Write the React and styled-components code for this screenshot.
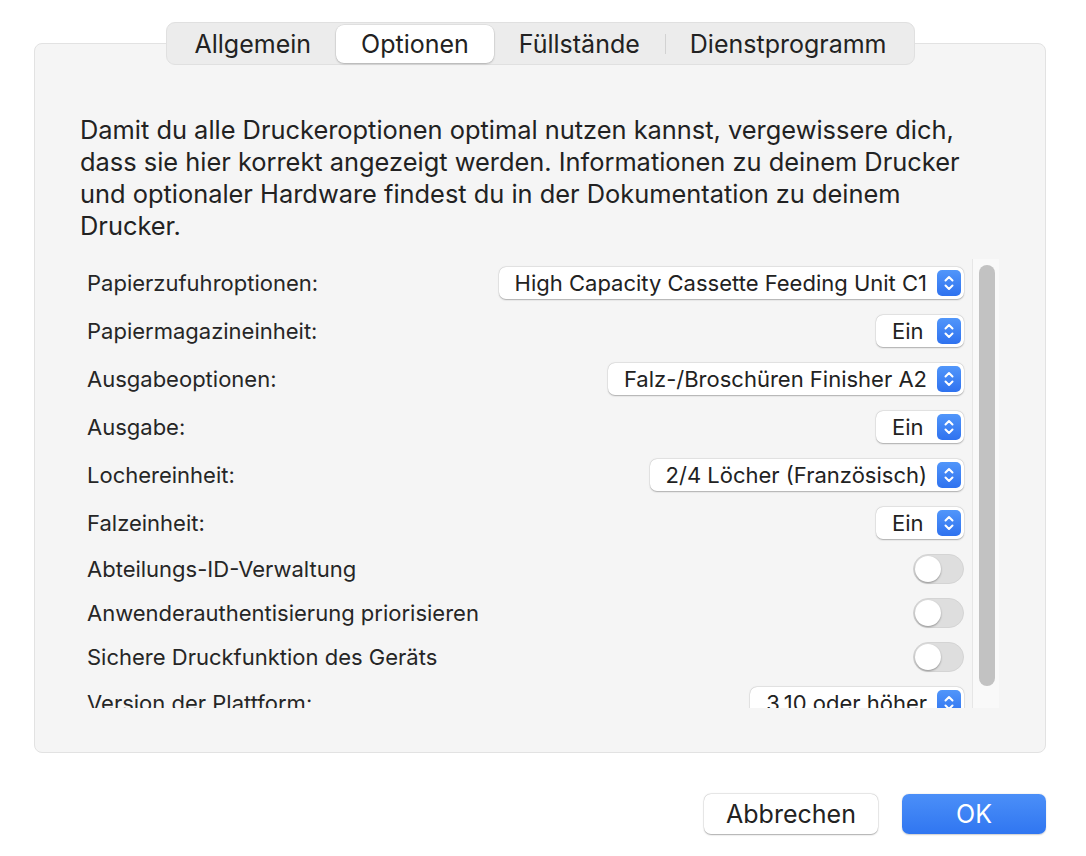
import React, { useState } from 'react'
import styled, { createGlobalStyle } from 'styled-components'

const tabs = ['Allgemein', 'Optionen', 'Füllstände', 'Dienstprogramm']

const options = [
  { label: 'Papierzufuhroptionen:', kind: 'popup', value: 'High Capacity Cassette Feeding Unit C1' },
  { label: 'Papiermagazineinheit:', kind: 'popup', value: 'Ein' },
  { label: 'Ausgabeoptionen:', kind: 'popup', value: 'Falz-/Broschüren Finisher A2' },
  { label: 'Ausgabe:', kind: 'popup', value: 'Ein' },
  { label: 'Lochereinheit:', kind: 'popup', value: '2/4 Löcher (Französisch)' },
  { label: 'Falzeinheit:', kind: 'popup', value: 'Ein' },
  { label: 'Abteilungs-ID-Verwaltung', kind: 'toggle' },
  { label: 'Anwenderauthentisierung priorisieren', kind: 'toggle' },
  { label: 'Sichere Druckfunktion des Geräts', kind: 'toggle' },
  { label: 'Version der Plattform:', kind: 'popup', value: '3.10 oder höher' },
]

const App = () => {
  const [active, setActive] = useState('Optionen')

  return (
    <>
      <GlobalStyle />
      <Sheet>
        <TabBar>
          {tabs.map((tab, i) => {
            // separator only between two unselected tabs
            const prev = tabs[i - 1]
            const showSep = i > 0 && tab !== active && prev !== active
            return (
              <Tab key={tab} selected={tab === active} onClick={() => setActive(tab)}>
                {showSep && <Separator />}
                {tab}
              </Tab>
            )
          })}
        </TabBar>
        <Panel>
          <Intro>
            Damit du alle Druckeroptionen optimal nutzen kannst, vergewissere dich,
            dass sie hier korrekt angezeigt werden. Informationen zu deinem Drucker
            und optionaler Hardware findest du in der Dokumentation zu deinem
            Drucker.
          </Intro>
          <ScrollArea>
            <List>
              {options.map(opt => (
                <Row key={opt.label} toggle={opt.kind === 'toggle'}>
                  <Label>{opt.label}</Label>
                  {opt.kind === 'popup' ? (
                    <Popup>
                      <span>{opt.value}</span>
                      <Stepper />
                    </Popup>
                  ) : (
                    <Toggle>
                      <Knob />
                    </Toggle>
                  )}
                </Row>
              ))}
            </List>
            <Track>
              <Thumb />
            </Track>
          </ScrollArea>
        </Panel>
        <Footer>
          <Button>Abbrechen</Button>
          <Button primary>OK</Button>
        </Footer>
      </Sheet>
    </>
  )
}

const Stepper = () => (
  <StepperBox>
    <svg width="12" height="18" viewBox="0 0 12 18" fill="none">
      <path d="M2.5 6.5 L6 3 L9.5 6.5" stroke="white" strokeWidth="2" strokeLinecap="round" strokeLinejoin="round" />
      <path d="M2.5 11.5 L6 15 L9.5 11.5" stroke="white" strokeWidth="2" strokeLinecap="round" strokeLinejoin="round" />
    </svg>
  </StepperBox>
)

const GlobalStyle = createGlobalStyle`
  body {
    margin: 0;
    background: #ffffff;
    font-family: Inter, "Liberation Sans", Arial, sans-serif;
    color: #262626;
  }
`

const Sheet = styled.div`
  width: 1086px;
  height: 856px;
  box-sizing: border-box;
  padding: 22px 40px 0 34px;
  display: flex;
  flex-direction: column;
`

const TabBar = styled.div`
  align-self: center;
  display: flex;
  align-items: center;
  height: 43px;
  box-sizing: border-box;
  padding: 0 2px;
  background: #ececec;
  border: 1px solid #e0e0e0;
  border-radius: 9px;
  position: relative;
  z-index: 1;
  margin-left: 1px;
`

const Tab = styled.div`
  position: relative;
  height: 38px;
  display: flex;
  align-items: center;
  padding: 0 25px;
  font-size: 25px;
  color: #222;
  border-radius: 8px;
  cursor: default;
  background: ${({ selected }) => (selected ? '#ffffff' : 'transparent')};
  box-shadow: ${({ selected }) => (selected ? '0 1px 2px rgba(0,0,0,0.22), 0 0 0 0.5px rgba(0,0,0,0.08)' : 'none')};
`

const Separator = styled.span`
  position: absolute;
  left: 0;
  top: 9px;
  width: 1px;
  height: 20px;
  background: #d2d2d2;
`

const Panel = styled.div`
  margin-top: -22px;
  background: #f5f5f5;
  border: 1px solid #e2e2e2;
  border-radius: 8px;
  padding: 70px 46px 44px 45px;
  display: flex;
  flex-direction: column;
`

const Intro = styled.p`
  margin: 0 0 17px;
  max-width: 905px;
  font-size: 25.4px;
  line-height: 32px;
  color: #222;
`

const ScrollArea = styled.div`
  height: 449px;
  overflow: hidden;
  display: flex;
`

const List = styled.div`
  flex: 1;
  padding: 0 8px 0 7px;
`

const Row = styled.div`
  height: ${({ toggle }) => (toggle ? '44px' : '48px')};
  display: flex;
  align-items: center;
  justify-content: space-between;
`

const Label = styled.span`
  font-size: 22px;
  color: #262626;
`

const Popup = styled.div`
  min-width: 88px;
  height: 32px;
  box-sizing: border-box;
  display: flex;
  align-items: center;
  justify-content: space-between;
  gap: 10px;
  padding: 0 3px 0 16px;
  background: #ffffff;
  border-radius: 7px;
  box-shadow: 0 0.5px 1.5px rgba(0,0,0,0.28), 0 0 0 0.5px rgba(0,0,0,0.06);
  font-size: 22px;
  color: #222;
`

const StepperBox = styled.span`
  width: 24px;
  height: 26px;
  border-radius: 5px;
  display: flex;
  align-items: center;
  justify-content: center;
  background: linear-gradient(#5196fa, #2f72ef);
`

const Toggle = styled.div`
  width: 51px;
  height: 30px;
  box-sizing: border-box;
  border-radius: 15px;
  background: #dedede;
  border: 1px solid #d4d4d4;
  display: flex;
  align-items: center;
  padding-left: 1px;
`

const Knob = styled.span`
  width: 26px;
  height: 26px;
  border-radius: 50%;
  background: #ffffff;
  box-shadow: 0 1px 2px rgba(0,0,0,0.35);
`

const Track = styled.div`
  width: 27px;
  flex-shrink: 0;
  background: #f9f9f9;
  border-left: 1px solid #e6e6e6;
  padding: 6px 0 0 6px;
  box-sizing: border-box;
`

const Thumb = styled.div`
  width: 16px;
  height: 421px;
  border-radius: 8px;
  background: #c2c2c2;
`

const Footer = styled.div`
  display: flex;
  justify-content: flex-end;
  gap: 24px;
  margin-top: 41px;
`

const Button = styled.button`
  height: 40px;
  box-sizing: border-box;
  padding: 0 ${({ primary }) => (primary ? '50px' : '18px')};
  min-width: ${({ primary }) => (primary ? '144px' : '174px')};
  border: none;
  border-radius: 7px;
  font-family: inherit;
  font-size: 25px;
  color: ${({ primary }) => (primary ? '#ffffff' : '#222')};
  background: ${({ primary }) => (primary ? 'linear-gradient(#4b8ff8, #3076f1)' : '#ffffff')};
  box-shadow: ${({ primary }) => (primary ? '0 0.5px 1.5px rgba(0,0,0,0.2)' : '0 0.5px 1.5px rgba(0,0,0,0.3), 0 0 0 0.5px rgba(0,0,0,0.08)')};
`

export default App
